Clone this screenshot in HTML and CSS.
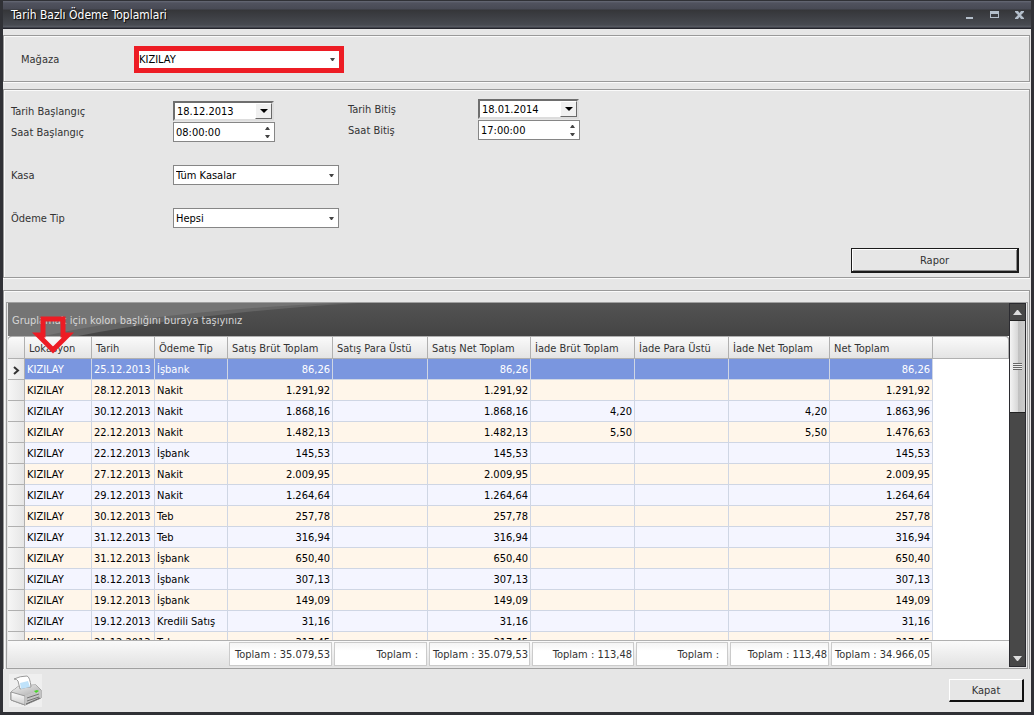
FILE: index.html
```html
<!DOCTYPE html>
<html lang="tr">
<head>
<meta charset="UTF-8" />
<title>Tarih Bazlı Ödeme Toplamlari</title>
<link rel="stylesheet" href="styles.css">
</head>
<body>
<div class="window">
  <!-- Başlık çubuğu -->
  <header class="titlebar">
    <h1>Tarih Bazlı Ödeme Toplamlari</h1>
    <div class="window-buttons">
      <button type="button" aria-label="Simge durumuna küçült"><svg width="10" height="8"><path d="M1 6h7v2H1z"/></svg></button>
      <button type="button" aria-label="Ekranı kapla"><svg width="10" height="8"><path d="M0 0h9v7H0zM1 3v3h7V3z" fill-rule="evenodd"/></svg></button>
      <button type="button" aria-label="Pencereyi kapat"><svg width="10" height="8"><path d="M0 0h3l1.500 2L6 0h3v1L6 4l3 3v1H6L4.500 6 3 8H0V7l3-3-3-3z"/></svg></button>
    </div>
  </header>

  <main class="content">
    <!-- Mağaza seçimi -->
    <section class="panel store">
      <label for="magaza">Mağaza</label>
      <select id="magaza" class="marked"><option>KIZILAY</option></select>
    </section>

    <!-- Filtreler -->
    <section class="panel filters">
      <div class="filter-cols">
        <div class="col-start">
          <div class="field">
            <label for="tarih-bas">Tarih Başlangıç</label>
            <div class="date"><input id="tarih-bas" type="text" value="18.12.2013"><button type="button" aria-label="Takvim"><svg width="8" height="4"><path d="M0 0h8L4 4z"/></svg></button></div>
          </div>
          <div class="field">
            <label for="saat-bas">Saat Başlangıç</label>
            <div class="spin"><input id="saat-bas" type="text" value="08:00:00"><div class="spin-buttons"><button type="button" aria-label="Artır"><svg width="5" height="3"><path d="M0 3h5L3 0H2z"/></svg></button><button type="button" aria-label="Azalt"><svg width="5" height="3"><path d="M0 0h5L3 3H2z"/></svg></button></div></div>
          </div>
          <div class="field spaced">
            <label for="kasa">Kasa</label>
            <select id="kasa"><option>Tüm Kasalar</option></select>
          </div>
          <div class="field spaced">
            <label for="odeme-tip">Ödeme Tip</label>
            <select id="odeme-tip"><option>Hepsi</option></select>
          </div>
        </div>
        <div class="col-end">
          <div class="field">
            <label for="tarih-bit">Tarih Bitiş</label>
            <div class="date"><input id="tarih-bit" type="text" value="18.01.2014"><button type="button" aria-label="Takvim"><svg width="8" height="4"><path d="M0 0h8L4 4z"/></svg></button></div>
          </div>
          <div class="field">
            <label for="saat-bit">Saat Bitiş</label>
            <div class="spin"><input id="saat-bit" type="text" value="17:00:00"><div class="spin-buttons"><button type="button" aria-label="Artır"><svg width="5" height="3"><path d="M0 3h5L3 0H2z"/></svg></button><button type="button" aria-label="Azalt"><svg width="5" height="3"><path d="M0 0h5L3 3H2z"/></svg></button></div></div>
          </div>
        </div>
      </div>
      <button type="button" class="btn btn-report">Rapor</button>
    </section>

    <!-- Sonuç tablosu -->
    <section class="panel results">
      <div class="grid">
        <div class="grid-main">
          <div class="group-bar">
            <svg class="shine" viewBox="0 0 350 33" preserveAspectRatio="none"><path d="M0 0h350Q190 10 70 33H0z" fill="#646464"/><path d="M0 0h330Q150 8 36 33H0z" fill="#747474"/></svg>
            <span>Gruplamak için kolon başlığını buraya taşıyınız</span>
          </div>
          <svg class="arrow" width="42" height="39" viewBox="0 0 42 39"><path d="M11 3h20v16h5L21 34 6 19h5z" fill="none" stroke="#ed1c24" stroke-width="5"/></svg>
          <div class="table-area">
            <table>
              <colgroup>
                <col class="c-ind"><col class="c-lok"><col class="c-tarih"><col class="c-tip"><col class="c-sbt"><col class="c-spu"><col class="c-snt"><col class="c-ibt"><col class="c-ipu"><col class="c-int"><col class="c-net"><col>
              </colgroup>
              <thead>
                <tr><th></th><th>Lokasyon</th><th>Tarih</th><th>Ödeme Tip</th><th>Satış Brüt Toplam</th><th>Satış Para Üstü</th><th>Satış Net Toplam</th><th>İade Brüt Toplam</th><th>İade Para Üstü</th><th>İade Net Toplam</th><th>Net Toplam</th><th></th></tr>
              </thead>
              <tbody>
                <tr class="selected"><td><svg width="7" height="9"><path d="M1 1l4 3.500-4 3.500" fill="none" stroke="#333" stroke-width="2"/></svg></td><td>KIZILAY</td><td>25.12.2013</td><td>İşbank</td><td>86,26</td><td></td><td>86,26</td><td></td><td></td><td></td><td>86,26</td><td></td></tr>
                <tr><td></td><td>KIZILAY</td><td>28.12.2013</td><td>Nakit</td><td>1.291,92</td><td></td><td>1.291,92</td><td></td><td></td><td></td><td>1.291,92</td><td></td></tr>
                <tr><td></td><td>KIZILAY</td><td>30.12.2013</td><td>Nakit</td><td>1.868,16</td><td></td><td>1.868,16</td><td>4,20</td><td></td><td>4,20</td><td>1.863,96</td><td></td></tr>
                <tr><td></td><td>KIZILAY</td><td>22.12.2013</td><td>Nakit</td><td>1.482,13</td><td></td><td>1.482,13</td><td>5,50</td><td></td><td>5,50</td><td>1.476,63</td><td></td></tr>
                <tr><td></td><td>KIZILAY</td><td>22.12.2013</td><td>İşbank</td><td>145,53</td><td></td><td>145,53</td><td></td><td></td><td></td><td>145,53</td><td></td></tr>
                <tr><td></td><td>KIZILAY</td><td>27.12.2013</td><td>Nakit</td><td>2.009,95</td><td></td><td>2.009,95</td><td></td><td></td><td></td><td>2.009,95</td><td></td></tr>
                <tr><td></td><td>KIZILAY</td><td>29.12.2013</td><td>Nakit</td><td>1.264,64</td><td></td><td>1.264,64</td><td></td><td></td><td></td><td>1.264,64</td><td></td></tr>
                <tr><td></td><td>KIZILAY</td><td>30.12.2013</td><td>Teb</td><td>257,78</td><td></td><td>257,78</td><td></td><td></td><td></td><td>257,78</td><td></td></tr>
                <tr><td></td><td>KIZILAY</td><td>31.12.2013</td><td>Teb</td><td>316,94</td><td></td><td>316,94</td><td></td><td></td><td></td><td>316,94</td><td></td></tr>
                <tr><td></td><td>KIZILAY</td><td>31.12.2013</td><td>İşbank</td><td>650,40</td><td></td><td>650,40</td><td></td><td></td><td></td><td>650,40</td><td></td></tr>
                <tr><td></td><td>KIZILAY</td><td>18.12.2013</td><td>İşbank</td><td>307,13</td><td></td><td>307,13</td><td></td><td></td><td></td><td>307,13</td><td></td></tr>
                <tr><td></td><td>KIZILAY</td><td>19.12.2013</td><td>İşbank</td><td>149,09</td><td></td><td>149,09</td><td></td><td></td><td></td><td>149,09</td><td></td></tr>
                <tr><td></td><td>KIZILAY</td><td>19.12.2013</td><td>Kredili Satış</td><td>31,16</td><td></td><td>31,16</td><td></td><td></td><td></td><td>31,16</td><td></td></tr>
                <tr><td></td><td>KIZILAY</td><td>21.12.2013</td><td>Teb</td><td>317,45</td><td></td><td>317,45</td><td></td><td></td><td></td><td>317,45</td><td></td></tr>
              </tbody>
            </table>
          </div>
          <!-- Toplam satırı -->
          <table class="totals">
            <colgroup>
              <col class="c-ind"><col class="c-lok"><col class="c-tarih"><col class="c-tip"><col class="c-sbt"><col class="c-spu"><col class="c-snt"><col class="c-ibt"><col class="c-ipu"><col class="c-int"><col class="c-net"><col>
            </colgroup>
            <tfoot>
              <tr><td colspan="4"></td><td><div>Toplam : 35.079,53</div></td><td><div class="empty-sum">Toplam :</div></td><td><div>Toplam : 35.079,53</div></td><td><div>Toplam : 113,48</div></td><td><div class="empty-sum">Toplam :</div></td><td><div>Toplam : 113,48</div></td><td><div>Toplam : 34.966,05</div></td><td></td></tr>
            </tfoot>
          </table>
        </div>
        <div class="scrollbar">
          <button type="button" aria-label="Yukarı"><svg width="9" height="5"><path d="M0 5h9L5 0H4z"/></svg></button>
          <div class="thumb"></div>
          <button type="button" class="down" aria-label="Aşağı"><svg width="9" height="5"><path d="M0 0h9L5 5H4z"/></svg></button>
        </div>
      </div>
    </section>
  </main>

  <footer class="bottom">
    <button type="button" class="print" aria-label="Yazdır">
      <svg width="33" height="33" viewBox="0 0 33 33">
        <defs>
          <linearGradient id="front" x2="0" y2="1"><stop offset="0" stop-color="#fff"/><stop offset="1" stop-color="#ccc"/></linearGradient>
          <linearGradient id="top" x2="1" y2="1"><stop offset="0" stop-color="#f2f2f2"/><stop offset="1" stop-color="#aaa"/></linearGradient>
        </defs>
        <path d="M2 18l8-6 17-1 5 5v8L16 31 2 26z" fill="#ddd" stroke="#808080"/>
        <path d="M2 18l8-6 17-1 5 5-16 6z" fill="url(#top)"/>
        <path d="M2 18l14 4v9L2 26z" fill="url(#front)" stroke="#999" stroke-width="1"/>
        <path d="M16 22l16-6v8l-16 7z" fill="#c4c4c4"/>
        <path d="M18 24l12-4M18 27l12-4" stroke="#777"/>
        <path d="M17 30l14-6" stroke="#666"/>
        <path d="M11 15L9 7Q8 5 5 5q6-3 13-3 3 1 4 11-5 0-11 2z" fill="#fff" stroke="#9a9a9a"/>
        <path d="M11 9l8-2 2 6-9 2z" fill="#bfe2fa"/>
        <path d="M25 17l3-1 2 1-3 2z" fill="#4bd62c"/>
      </svg>
    </button>
    <button type="button" class="btn btn-close">Kapat</button>
  </footer>
</div>
</body>
</html>
```
FILE: styles.css
```css
/* ========== Genel ========== */
* {
  box-sizing: border-box;
}
html, body {
  margin: 0;
  height: 100%;
  overflow: hidden;
}
body, button, input, select {
  font-family: "DejaVu Sans Condensed", "DejaVu Sans", Tahoma, sans-serif;
  font-size: 11px;
  line-height: 14px;
  color: #000;
}
button {
  padding: 0;
  border: 0;
  background: none;
}
svg {
  display: block;
}
.window {
  height: 100vh;
  display: flex;
  flex-direction: column;
  background: #e6e6e6;
  border: solid #303136;
  border-width: 1px 3px 3px;
}
/* Başlık çubuğu */
.titlebar {
  height: 28px;
  display: flex;
  align-items: center;
  justify-content: space-between;
  padding: 0 6px 0 8px;
  background: linear-gradient(#676a76 0, #50525e 2px, #484a55 8px, #353639 9px, #474a51 24px, #5a5d66 26px, #25262e 27px);
}
.titlebar h1 {
  margin: 0;
  font-size: 12px;
  font-weight: normal;
  color: #fff;
  text-shadow: 1px 1px 1px #000;
}
.window-buttons {
  display: flex;
  gap: 15px;
  fill: #b4bfcb;
}
/* Paneller */
.content {
  flex: 1;
  min-height: 0;
  display: flex;
  flex-direction: column;
  padding: 6px 1px 0 0;
}
.panel {
  border: 1px solid #999;
  box-shadow: inset 1px 1px #fafafa, 0 1px #fafafa;
}
label {
  padding-top: 2px;
  color: #333;
}
.store {
  display: flex;
  align-items: center;
  height: 47px;
  padding: 1px 0 0 17px;
  margin-bottom: 7px;
}
.store label {
  width: 113px;
}
select {
  appearance: none;
  width: 166px;
  height: 20px;
  padding: 1px 2px 0;
  border: 1px solid #868686;
  border-radius: 0;
  background: #fff url("data:image/svg+xml,%3Csvg xmlns='http://www.w3.org/2000/svg' width='5' height='3'%3E%3Cpath d='M0 0h5L3 3H2z' fill='%23444'/%3E%3C/svg%3E") no-repeat right 4px center;
}
/* Vurgulanan mağaza kutusu */
select.marked {
  width: 210px;
  height: 27px;
  padding: 1px 0 0;
  border: 5px solid #ed1c24;
}
/* Filtreler */
.filters {
  display: flex;
  flex-direction: column;
  height: 189px;
  padding: 9px 10px 4px 7px;
  margin-bottom: 12px;
}
.filter-cols {
  flex: 1;
  display: flex;
  gap: 9px;
}
.col-start {
  padding-top: 2px;
}
.field {
  display: flex;
  align-items: center;
  height: 20px;
  margin-bottom: 1px;
}
.col-start label {
  width: 162px;
}
.col-end label {
  width: 130px;
}
.field.spaced {
  margin-top: 23px;
}
.field input {
  flex: 1;
  min-width: 0;
  padding: 1px 2px 0;
  border: 0;
  outline: 0;
  background: none;
}
.date, .spin {
  display: flex;
  width: 102px;
  height: 20px;
  background: #fff;
}
.date {
  width: 101px;
  border: 2px solid;
  border-color: #6e6e6e #ddd #ddd #6e6e6e;
}
.date button {
  width: 17px;
  display: flex;
  align-items: center;
  justify-content: center;
  background: #f0f0f0;
  border: 1px solid;
  border-color: #fff #696969 #696969 #fff;
}
.spin {
  border: 1px solid #868686;
}
.spin-buttons {
  width: 14px;
  display: flex;
  flex-direction: column;
  align-items: center;
  justify-content: center;
  gap: 5px;
  fill: #444;
}
.btn {
  padding-top: 2px;
  background: #e6e6e6;
  color: #333;
}
.btn-report {
  align-self: flex-end;
  width: 168px;
  height: 25px;
  border: solid #1b1b1b;
  border-width: 1px 2px 2px 1px;
  box-shadow: inset 1px 1px #fff, inset -1px -1px #8c8c8c;
}
/* Sonuç tablosu */
.results {
  flex: 1;
  min-height: 0;
  padding: 11px 1px 0 2px;
  border-bottom: 0;
  box-shadow: inset 1px 1px #fafafa;
}
.grid {
  height: 100%;
  display: flex;
  border: 1px solid #a0a0a0;
  padding: 0 1px 1px;
}
.grid-main {
  position: relative;
  flex: 1;
  min-width: 0;
  display: flex;
  flex-direction: column;
}
.group-bar {
  position: relative;
  height: 33px;
  display: flex;
  align-items: center;
  padding: 2px 0 0 4px;
  color: #d6d6d6;
  background: linear-gradient(#535353, #444);
}
.group-bar span {
  position: relative;
}
.shine {
  position: absolute;
  top: 0;
  left: 0;
  width: 350px;
  height: 33px;
}
.arrow {
  position: absolute;
  top: 13px;
  left: 24px;
  z-index: 3;
}
.table-area {
  flex: 1;
  min-height: 0;
  overflow: hidden;
  background: #fff;
}
table {
  width: 100%;
  table-layout: fixed;
  border-collapse: separate;
  border-spacing: 0;
}
.c-ind { width: 17px; }
.c-lok { width: 67px; }
.c-tarih { width: 63px; }
.c-tip { width: 73px; }
.c-sbt { width: 105px; }
.c-spu { width: 95px; }
.c-snt, .c-net { width: 103px; }
.c-ibt { width: 104px; }
.c-ipu { width: 94px; }
.c-int { width: 101px; }
th, td {
  padding: 2px 2px 0;
  white-space: nowrap;
}
thead tr {
  background: #444;
}
th {
  height: 23px;
  padding-left: 4px;
  font-weight: normal;
  text-align: left;
  color: #333;
  background: linear-gradient(#fafafa, #e4e4e4);
  border: solid #b0b0b0;
  border-width: 1px 1px 1px 0;
}
th:first-child {
  border-top-left-radius: 4px;
}
th:last-child {
  border-top-right-radius: 4px;
}
tbody td {
  height: 21px;
  text-align: right;
  background: #f4f5ff;
  border: solid #cfd6e4;
  border-width: 0 1px 1px 0;
}
tbody tr:nth-child(even) td {
  background: #fff6ea;
}
tbody tr.selected td {
  color: #fff;
  background: #7a96df;
}
tbody td:nth-child(-n+4) {
  text-align: left;
}
tbody tr td:first-child, tbody tr.selected td:first-child {
  padding-left: 5px;
  background: linear-gradient(90deg, #f6f6f6, #e6e6e6);
  border-color: #b0b0b0;
}
tbody tr td:last-child, tbody tr:nth-child(even) td:last-child, tbody tr.selected td:last-child {
  background: #fff;
  border: 0;
}
/* Toplam satırı */
.totals {
  background: linear-gradient(#fafafa, #e2e2e2);
  border-top: 1px solid #b0b0b0;
}
tfoot td {
  height: 26px;
  padding: 1px;
  text-align: right;
  color: #333;
}
tfoot div {
  padding: 5px 1px 3px 0;
  background: linear-gradient(#f4f4f4, #fff 8px);
  border: 1px solid #cbcbcb;
}
tfoot div.empty-sum {
  padding-right: 8px;
}
/* Kaydırma çubuğu */
.scrollbar {
  width: 17px;
  display: flex;
  flex-direction: column;
  background: #484848;
  border: 1px solid #2b2b30;
}
.scrollbar button {
  height: 16px;
  display: flex;
  align-items: center;
  justify-content: center;
  fill: #ddd;
}
.scrollbar .down {
  margin-top: auto;
}
.thumb {
  height: 93px;
  display: flex;
  border: 1px solid #222;
  border-width: 1px 0;
  background: linear-gradient(90deg, #f4f4f4, #d8d8d8 50%, #c0c0c0 51%, #ccc);
}
.thumb::before {
  content: "";
  width: 9px;
  height: 7px;
  margin: auto;
  background: repeating-linear-gradient(#666 0, #666 1px, #eee 1px, #eee 2px);
}
/* Alt çubuk */
.bottom {
  display: flex;
  align-items: center;
  justify-content: space-between;
  height: 43px;
  padding: 2px 7px 2px 6px;
}
.print {
  background: #efefef;
}
.btn-close {
  width: 75px;
  height: 23px;
  border: solid;
  border-width: 1px 2px 2px 1px;
  border-color: #fff #111 #111 #fff;
}
```
